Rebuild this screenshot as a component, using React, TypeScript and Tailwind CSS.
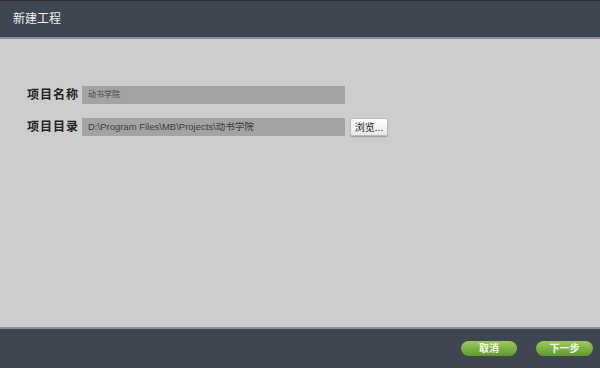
export default function App() {
  const cjk = { fontFamily: '"Liberation Sans", "Noto Sans CJK SC", sans-serif' };
  return (
    <div className="flex h-[368px] w-[600px] flex-col bg-[#cdcdcd]" style={cjk}>
      <div className="flex h-[37px] items-center border-t border-[#2a2f36] bg-[#3e4652] pl-[13px] text-[12px] text-[#eef0f2]">
        新建工程
      </div>
      <div className="h-[2px] bg-[#8b8f95]" />
      <div className="flex flex-1 flex-col gap-[14px] pl-[27px] pt-[47px]">
        <div className="flex items-center">
          <span className="w-[55px] text-[12px] font-bold tracking-[1px] text-[#222]">项目名称</span>
          <div className="flex h-[18px] w-[263px] items-center bg-[#a3a3a3] pl-[6px] text-[8px] text-[#444]">
            动书学院
          </div>
        </div>
        <div className="flex items-center">
          <span className="w-[55px] text-[12px] font-bold tracking-[1px] text-[#222]">项目目录</span>
          <div className="flex h-[18px] w-[263px] items-center bg-[#a3a3a3] pl-[6px] text-[9.5px] text-[#3a3a3a]">
            D:\Program Files\MB\Projects\动书学院
          </div>
          <button className="ml-[5px] flex h-[18px] w-[38px] items-center justify-center rounded-[2px] border border-[#bbb] bg-gradient-to-b from-[#ffffff] to-[#e8e8e8] text-[10px] text-[#222] shadow-[0_1px_1px_rgba(0,0,0,0.25)]">
            浏览...
          </button>
        </div>
      </div>
      <div className="h-[2px] bg-[#8b8f95]" />
      <div className="flex h-[39px] items-center justify-end gap-[19px] bg-[#3e4652] pr-[7px]">
        <button className="flex h-[15px] w-[56px] items-center justify-center rounded-full bg-gradient-to-b from-[#9ccc5c] to-[#5f9a2a] text-[10px] font-bold text-[#f4f8ee]">
          取消
        </button>
        <button className="flex h-[15px] w-[57px] items-center justify-center rounded-full bg-gradient-to-b from-[#9ccc5c] to-[#5f9a2a] text-[10px] font-bold text-[#f4f8ee]">
          下一步
        </button>
      </div>
    </div>
  );
}
